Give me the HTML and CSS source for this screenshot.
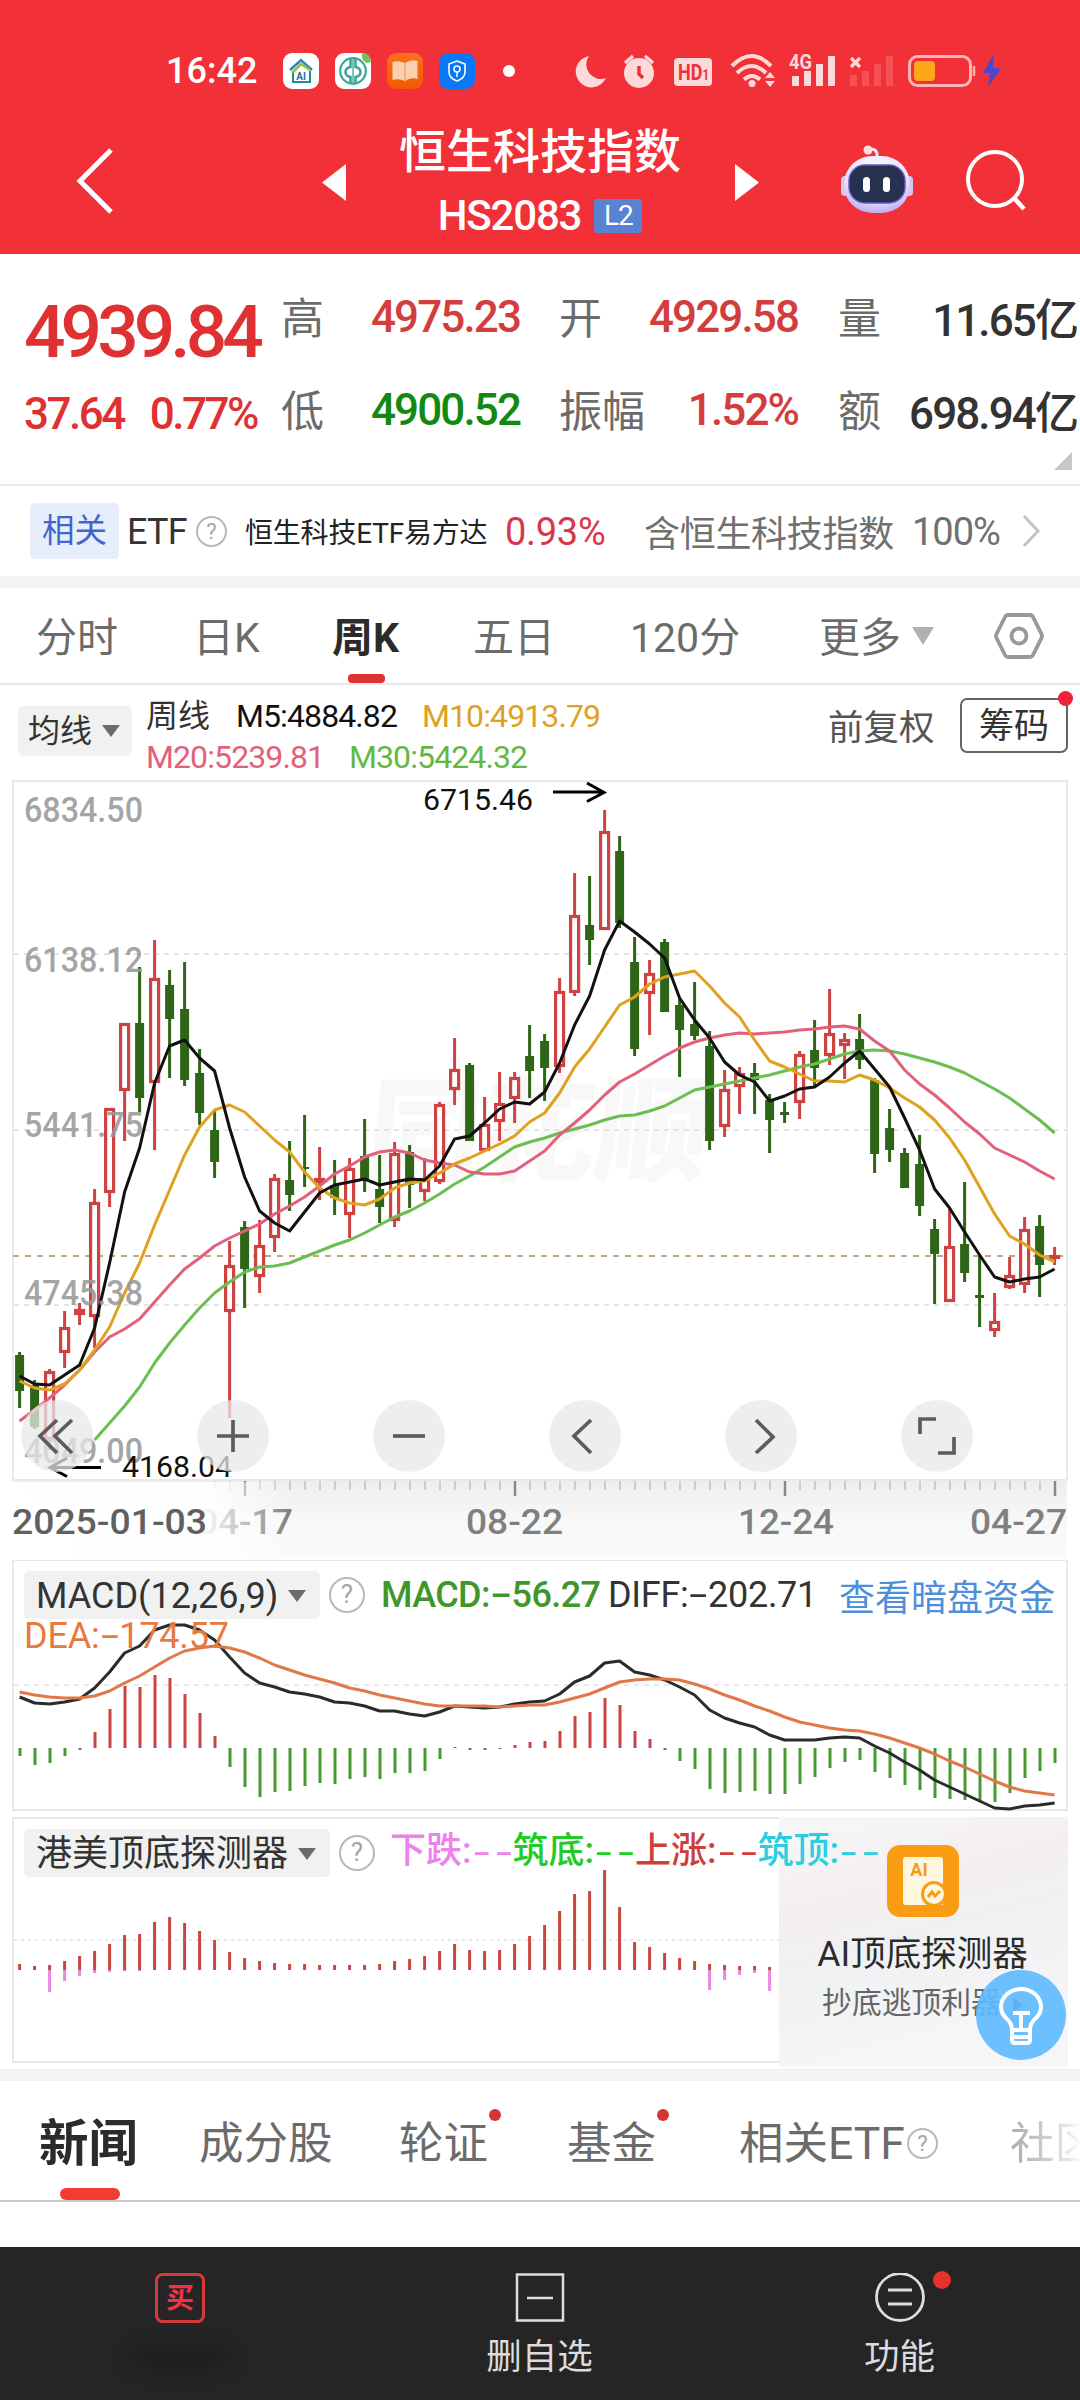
FILE: index.html
```html
<!DOCTYPE html>
<html lang="zh-CN">
<head>
  <meta charset="UTF-8" />
  <meta name="viewport" content="width=device-width, initial-scale=1.0"/>
  <title>恒生科技指数 HS2083</title>
  <link rel="stylesheet" href="styles.css">
</head>
<body>
<div class="page">

  <header class="header">
    <div class="status-bar">
      <span class="clock">16:42</span>
      <div class="app-icons">
        <svg width="36" height="36" viewBox="0 0 36 36"><rect width="36" height="36" rx="9" fill="#fff"/><path d="M7 17L18 7l11 10" fill="none" stroke="#2b7fc4" stroke-width="2.4"/><path d="M9 20l9-9 9 6" fill="none" stroke="#8cc63f" stroke-width="2.6"/><path d="M10 20v9h17V18" fill="none" stroke="#1d8a9b" stroke-width="2"/><text x="18" y="27" font-size="10" font-weight="700" text-anchor="middle" fill="#1d6fa5">AI</text></svg>
        <svg width="36" height="36" viewBox="0 0 36 36"><rect width="36" height="36" rx="9" fill="#fff"/><circle cx="18" cy="18" r="12.8" fill="none" stroke="#3ba79a" stroke-width="2.2"/><path d="M15.500 5v9q-5 1-5 5t5 5v6M20.500 5v9q5 1 5 5t-5 5v6" fill="none" stroke="#3ba79a" stroke-width="2.6"/><path d="M18 6v24" stroke="#7cc5bc" stroke-width="2"/><path d="M27 0q9 0 9 9l-4 1q-6-2-5-10z" fill="#72c35a"/></svg>
        <svg width="36" height="36" viewBox="0 0 36 36"><defs><linearGradient id="book" x2="0" y2="1"><stop offset="0" stop-color="#fb6f1c"/><stop offset="1" stop-color="#f25a02"/></linearGradient></defs><rect width="36" height="36" rx="9" fill="url(#book)"/><path d="M5.500 9q6-2 12.500 1q6-4 12.500-2v18q-7-2-12.500 2q-6-3-12.500-1z" fill="#fbd0b0"/><path d="M18 10v18" stroke="#e9a67c" stroke-width="1.5"/></svg>
        <svg width="36" height="36" viewBox="0 0 36 36"><rect width="36" height="36" rx="9" fill="#0a78f5"/><path d="M18 8l8 3v8q0 6-8 9q-8-3-8-9v-8z" fill="none" stroke="#fff" stroke-width="1.6"/><circle cx="18" cy="16" r="3" fill="none" stroke="#fff" stroke-width="1.5"/><path d="M18 19v5" stroke="#fff" stroke-width="1.5"/></svg>
      </div>
      <i class="status-dot"></i>
      <svg class="sys-icons" width="430" height="40" viewBox="570 51 430 40">
        <path d="M588 56a15.800 15.800 0 1 0 17 22a14.500 14.500 0 0 1-17-22z" fill="#fdd9da"/>
        <circle cx="638" cy="73" r="15" fill="#fdd9da"/><path d="M624 63l8-7M652 63l-8-7" stroke="#fdd9da" stroke-width="3.5"/><path d="M638 66v8l4 4" fill="none" stroke="#f03036" stroke-width="3.5"/>
        <rect x="673" y="58" width="38" height="28" rx="4" fill="#fdd9da"/><text x="677" y="80" font-size="22" font-weight="700" textLength="31" lengthAdjust="spacingAndGlyphs" fill="#f03036">HD<tspan font-size="14">1</tspan></text>
        <g fill="none" stroke="#fdd9da" stroke-width="4"><path d="M731 66q19.500-20 39 0M736 73q14.500-14 29 0M743 79.500q8-7 16 0"/></g><circle cx="751" cy="83.500" r="3.500" fill="#fdd9da"/><path d="M764 78l5-6 5 6zM764 81h10l-5 6z" fill="#fdd9da"/>
        <text x="788" y="69" font-size="20" font-weight="700" textLength="23" lengthAdjust="spacingAndGlyphs" fill="#fdd9da">4G</text>
        <path d="M791 76h7v10h-7zM803 71h7v15h-7zM815 64h7v22h-7zM827 56h7v30h-7z" fill="#fdd9da"/>
        <path d="M850 58l9 9M859 58l-9 9" stroke="#fdd9da" stroke-width="3.2"/>
        <path d="M849 75h7v11h-7zM861 71h7v15h-7zM873 64h7v22h-7zM885 56h7v30h-7z" fill="#f65055"/>
        <rect x="908.500" y="56.500" width="61" height="29" rx="8" fill="none" stroke="#fbb3b5" stroke-width="3"/><rect x="913" y="61" width="21" height="20" rx="4" fill="#fda619"/><path d="M973 66v10" stroke="#fbb3b5" stroke-width="2.500"/>
        <path d="M993 54l-11 19h7l-2 14 13-19h-8z" fill="#4747d6"/>
      </svg>
    </div>
    <div class="title-bar">
      <svg width="40" height="68" viewBox="0 0 40 68"><path d="M36 3L5 34l31 31" fill="none" stroke="#fff" stroke-width="5"/></svg>
      <svg width="26" height="38" viewBox="0 0 26 38"><path d="M25 0v37L1 18.500z" fill="#fff"/></svg>
      <div class="title">
        <h1>恒生科技指数</h1>
        <div class="code">HS2083<span class="l2">L2</span></div>
      </div>
      <svg width="26" height="38" viewBox="0 0 26 38"><path d="M1 0v37l24-18.500z" fill="#fff"/></svg>
      <svg class="robot" width="76" height="70" viewBox="0 0 76 70">
        <defs><radialGradient id="head" cx=".5" cy=".3" r=".8"><stop offset="0" stop-color="#fff"/><stop offset=".6" stop-color="#e9e2fb"/><stop offset="1" stop-color="#a996ee"/></radialGradient></defs>
        <path d="M38 12q1-9-8-8" fill="none" stroke="#f3eefe" stroke-width="3"/><circle cx="29" cy="5" r="4.500" fill="#fbdde2"/>
        <rect x="2" y="31" width="9" height="20" rx="4" fill="#d3c6f7"/><rect x="65" y="31" width="9" height="20" rx="4" fill="#d3c6f7"/>
        <rect x="5" y="11" width="66" height="57" rx="28" fill="url(#head)"/>
        <rect x="10" y="20" width="56" height="38" rx="16" fill="#26304f" stroke="#6a55c6" stroke-width="1.500"/>
        <rect x="24" y="32" width="7" height="15" rx="3.500" fill="#fff"/><rect x="44" y="32" width="7" height="15" rx="3.500" fill="#fff"/>
      </svg>
      <svg class="search" width="64" height="64" viewBox="0 0 64 64"><circle cx="31" cy="30" r="27" fill="none" stroke="#fff" stroke-width="4"/><path d="M50 49l10 11" stroke="#fff" stroke-width="4.500"/></svg>
    </div>
  </header>

  <section class="quote">
    <div class="price">
      <div class="last">4939.84</div>
      <div class="change"><span>37.64</span><span>0.77%</span></div>
    </div>
    <div class="cell"><label>高</label><b class="up">4975.23</b></div>
    <div class="cell"><label>开</label><b class="up">4929.58</b></div>
    <div class="cell"><label>量</label><b>11.65亿</b></div>
    <div class="cell"><label>低</label><b class="down">4900.52</b></div>
    <div class="cell"><label>振幅</label><b class="up">1.52%</b></div>
    <div class="cell"><label>额</label><b>698.94亿</b></div>
    <i class="corner"></i>
  </section>

  <section class="related">
    <span class="tag">相关</span>
    <span class="etf">ETF</span>
    <i class="help small">?</i>
    <span class="fund">恒生科技ETF易方达</span>
    <span class="rate">0.93%</span>
    <span class="contain">含恒生科技指数</span>
    <span class="share">100%</span>
    <svg width="20" height="34" viewBox="0 0 20 34"><path d="M2 2l14 15L2 32" fill="none" stroke="#c4c4c4" stroke-width="3"/></svg>
  </section>

  <nav class="period">
    <span>分时</span>
    <span>日K</span>
    <span class="active">周K</span>
    <span>五日</span>
    <span>120分</span>
    <span>更多<i class="tri light"></i></span>
    <svg width="50" height="48" viewBox="0 0 50 48"><path d="M14 3h22q2 0 3 2l8 16q2 3 0 6l-8 16q-1 2-3 2H14q-2 0-3-2L3 27q-2-3 0-6l8-16q1-2 3-2z" fill="none" stroke="#999" stroke-width="3.800"/><circle cx="25" cy="24" r="7.500" fill="none" stroke="#999" stroke-width="3.800"/></svg>
  </nav>

  <section class="indicator">
    <span class="pill ma-pill">均线<i class="tri"></i></span>
    <div class="ma-list">
      <div><span class="zh">周线</span><span class="m5">M5:4884.82</span><span class="m10">M10:4913.79</span></div>
      <div><span class="m20">M20:5239.81</span><span class="m30">M30:5424.32</span></div>
    </div>
    <span class="adjust">前复权</span>
    <span class="chips">筹码</span>
  </section>

  <section class="panel main-chart">
    <svg id="kline" width="1080" height="780" viewBox="0 780 1080 780"></svg>
    <div class="tools">
      <span><svg viewBox="0 0 72 72"><path d="M36 20L19 36l17 17M51 20L34 36l17 17"/></svg></span>
      <span><svg viewBox="0 0 72 72"><path d="M20 36h32M36 20v32"/></svg></span>
      <span><svg viewBox="0 0 72 72"><path d="M20 36h32"/></svg></span>
      <span><svg viewBox="0 0 72 72"><path d="M42 20L25 36l17 17"/></svg></span>
      <span><svg viewBox="0 0 72 72"><path d="M31 20l17 17-17 16"/></svg></span>
      <span><svg viewBox="0 0 72 72"><path d="M19 34V19h16M37 53h16V37"/></svg></span>
    </div>
  </section>

  <section class="panel macd">
    <svg id="macd" width="1080" height="257" viewBox="0 1560 1080 257"></svg>
    <div class="panel-head">
      <span class="pill macd-pill">MACD(12,26,9)<i class="tri"></i></span>
      <i class="help">?</i>
      <span class="macd-value">MACD:<em>-</em>56.27</span>
      <span class="diff-value">DIFF:<em>-</em>202.71</span>
      <span class="link">查看暗盘资金</span>
    </div>
    <div class="dea-value">DEA:<em>-</em>174.57</div>
  </section>

  <section class="panel detector">
    <svg id="detector" width="1080" height="253" viewBox="0 1817 1080 253"></svg>
    <div class="promo">
      <svg width="72" height="72" viewBox="0 0 72 72"><rect width="72" height="72" rx="13" fill="#fb9d12"/><path d="M19 12h34q3 0 3 3v45H19q-3 0-3-3V15q0-3 3-3z" fill="#fff6df"/><text x="32" y="31" font-size="18" font-weight="700" text-anchor="middle" fill="#f79a15">AI</text><circle cx="47" cy="49" r="11.500" fill="#fff6df" stroke="#fb9d12" stroke-width="3"/><path d="M41 52l4-5 3 4 5-5" fill="none" stroke="#fb9d12" stroke-width="3"/></svg>
      <div class="promo-title">AI顶底探测器</div>
      <div class="promo-sub">抄底逃顶利器<i></i></div>
    </div>
    <div class="panel-head">
      <span class="pill det-pill">港美顶底探测器<i class="tri"></i></span>
      <i class="help">?</i>
      <div class="signals"><span class="s1">下跌:<em>--</em></span><span class="s2">筑底:<em>--</em></span><span class="s3">上涨:<em>--</em></span><span class="s4">筑顶:<em>--</em></span></div>
    </div>
    <svg class="lamp" width="90" height="90" viewBox="0 0 90 90"><circle cx="45" cy="45" r="45" fill="#61bbff" fill-opacity=".92"/><g fill="none" stroke="#fff" stroke-width="4"><path d="M36 60q0-7-6-12q-5-5-5-11a20 18 0 0 1 40 0q0 6-5 11q-6 5-6 12z"/><path d="M37 43h17M45 43v16M36 60v10q0 3 3 3h12q3 0 3-3V60M36 67h18"/></g></svg>
  </section>

  <nav class="news">
    <span class="active">新闻</span>
    <span>成分股</span>
    <span class="dot">轮证</span>
    <span class="dot">基金</span>
    <span>相关ETF<i class="help small">?</i></span>
    <span class="fade">社区</span>
  </nav>

  <footer class="bottom">
    <div class="nav-item">
      <svg width="50" height="50" viewBox="0 0 50 50"><rect x="1.500" y="1.500" width="47" height="47" rx="6" fill="none" stroke="#d63a3c" stroke-width="3"/><text x="25" y="35" font-size="28" font-weight="700" text-anchor="middle" fill="#f5304a">买</text></svg>
      <i class="smudge"></i>
    </div>
    <div class="nav-item">
      <svg width="50" height="50" viewBox="0 0 50 50"><path d="M2 1.500h46v46H2zM12 25h26" fill="none" stroke="#ddd" stroke-width="2.500"/></svg>
      <span>删自选</span>
    </div>
    <div class="nav-item">
      <svg width="50" height="50" viewBox="0 0 50 50"><circle cx="25" cy="24" r="23.500" fill="none" stroke="#ddd" stroke-width="2.800"/><path d="M13 17h24M13 31h24" stroke="#ddd" stroke-width="3"/></svg>
      <i class="badge"></i>
      <span>功能</span>
    </div>
  </footer>
</div>
<script src="charts.js"></script>
</body>
</html>
```

FILE: styles.css
```css
* {
  box-sizing: border-box;
}
body {
  margin: 0;
  background: #fff;
  font-family: Roboto, "Noto Sans CJK SC", sans-serif;
  color: #333;
}
i, em {
  font-style: normal;
}
svg {
  display: block;
}
.page {
  width: 1080px;
  height: 2400px;
  overflow: hidden;
  position: relative;
  display: flex;
  flex-direction: column;
}

/* header */
.header {
  height: 254px;
  background: #f23037;
  color: #fff;
  flex: none;
}
.status-bar {
  height: 111px;
  padding: 31px 0 0 166px;
  display: flex;
  align-items: center;
}
.clock {
  width: 117px;
  font-size: 36px;
  font-weight: 500;
}
.app-icons {
  display: flex;
  gap: 16px;
}
.status-dot {
  width: 12px;
  height: 12px;
  border-radius: 50%;
  background: #fff;
  margin: 0 56px 0 28px;
}
.title-bar {
  display: grid;
  grid-template-columns: 246px 65px 348px 105px 125px 70px;
  padding: 5px 0 0 75px;
  align-items: center;
  height: 138px;
}
.title-bar .robot {
  margin-top: -5px;
}
.title-bar > svg:first-child,
.title-bar .search {
  margin-top: -4px;
}
.title {
  width: 308px;
  text-align: center;
}
.title h1 {
  margin: 0;
  font-size: 47px;
  font-weight: 500;
  line-height: 64px;
  white-space: nowrap;
}
.code {
  display: flex;
  justify-content: center;
  align-items: center;
  font-size: 42px;
  font-weight: 500;
  letter-spacing: -1.200px;
  line-height: 60px;
  padding-top: 2px;
}
.l2 {
  width: 48px;
  height: 34px;
  line-height: 34px;
  background: #5a82d2;
  border-radius: 3px;
  font-size: 28px;
  font-weight: 400;
  margin-left: 13px;
}

/* quote */
.quote {
  position: relative;
  height: 232px;
  border-bottom: 2px solid #ebebeb;
  display: grid;
  grid-template-columns: 257px 278px 279px 242px;
  grid-template-rows: 93px 93px;
  padding: 16px 0 0 24px;
  flex: none;
}
.price {
  grid-row: 1 / 3;
  color: #df3131;
}
.last {
  font-size: 73px;
  font-weight: 500;
  letter-spacing: -4.900px;
  line-height: 125px;
}
.change {
  display: flex;
  justify-content: space-between;
  width: 233px;
  font-size: 44px;
  font-weight: 500;
  letter-spacing: -2.500px;
  line-height: 38px;
}
.cell {
  display: flex;
  width: 239px;
  justify-content: space-between;
  align-items: center;
  height: 93px;
  white-space: nowrap;
}
.cell label {
  font-size: 43px;
  color: #6b6b6b;
  margin-top: -3px;
}
.cell b {
  font-size: 44px;
  font-weight: 500;
  letter-spacing: -1.900px;
  color: #333;
}
.cell .up {
  color: #d23e3e;
}
.cell .down {
  color: #118a11;
}
.corner {
  position: absolute;
  right: 8px;
  bottom: 14px;
  border-bottom: 18px solid #c8c8c8;
  border-left: 18px solid transparent;
}

/* related etf */
.related {
  height: 102px;
  border-bottom: 12px solid #f4f4f4;
  display: grid;
  grid-template-columns: 97px 69px 49px 260px 139px 268px 110px 20px;
  padding-left: 30px;
  align-items: center;
  white-space: nowrap;
  flex: none;
}
.tag {
  width: 89px;
  height: 56px;
  line-height: 56px;
  text-align: center;
  border-radius: 5px;
  background: #e6edfb;
  color: #3f66cc;
  font-size: 32.500px;
}
.etf {
  font-size: 36px;
  letter-spacing: -0.800px;
  padding-top: 2px;
}
.fund {
  font-size: 28px;
  letter-spacing: -0.200px;
  color: #222;
}
.rate {
  font-size: 38px;
  letter-spacing: -0.300px;
  padding-top: 2px;
  color: #d8374a;
}
.contain {
  font-size: 36px;
  letter-spacing: -0.300px;
  color: #707070;
}
.share {
  font-size: 38px;
  letter-spacing: -1px;
  padding-top: 2px;
  color: #707070;
}
.help {
  width: 36px;
  height: 36px;
  line-height: 31px;
  border: 2.500px solid #b8b8b8;
  border-radius: 50%;
  color: #a5a5a5;
  font-size: 26px;
  text-align: center;
  flex: none;
}
.help.small {
  width: 31px;
  height: 31px;
  line-height: 27px;
  border-width: 2px;
  font-size: 22px;
}

/* period tabs */
.period {
  height: 97px;
  border-bottom: 2px solid #e8e8e8;
  display: grid;
  grid-template-columns: 157px 139px 141px 157px 189px 175px 50px;
  padding-left: 36px;
  align-items: center;
  color: #6b6b6b;
  font-size: 41px;
  flex: none;
}
.period span {
  position: relative;
  height: 95px;
  line-height: 100px;
  white-space: nowrap;
}
.period .active {
  color: #2b2b2b;
  font-weight: 700;
}
.period .active::after {
  content: "";
  position: absolute;
  left: 16px;
  bottom: 0;
  width: 37px;
  height: 9px;
  border-radius: 4px;
  background: #df3433;
}
.tri {
  display: inline-block;
  border: 9px solid transparent;
  border-top: 12px solid #6b6b6b;
  border-bottom: 0;
  margin: -5px 0 0 10px;
  vertical-align: middle;
}
.tri.light {
  border-width: 18px 11px 0;
  border-top-color: #b0b0b0;
  margin: -11px 0 0 11px;
}

/* indicator row */
.indicator {
  height: 95px;
  display: grid;
  grid-template-columns: 128px 682px 132px 108px;
  padding-left: 18px;
  white-space: nowrap;
  flex: none;
}
.pill {
  background: #f1f1f1;
  border-radius: 5px;
  color: #333;
}
.ma-pill {
  width: 114px;
  height: 50px;
  line-height: 51px;
  margin-top: 21px;
  padding-left: 10px;
  font-size: 32px;
}
.ma-list {
  padding-top: 11px;
  font-size: 32px;
  line-height: 40px;
  letter-spacing: -0.900px;
}
.ma-list div {
  height: 41px;
}
.ma-list span {
  display: inline-block;
}
.ma-list .zh {
  width: 90px;
  letter-spacing: 0;
}
.ma-list .m5 {
  width: 186px;
  color: #111;
}
.m10 {
  color: #e0a020;
}
.ma-list .m20 {
  width: 203px;
  color: #e2607a;
}
.m30 {
  color: #63b844;
}
.adjust {
  font-size: 35.500px;
  line-height: 52px;
  color: #555;
  margin-top: 17px;
}
.chips {
  position: relative;
  width: 108px;
  height: 55px;
  margin-top: 13px;
  border: 2px solid #666;
  border-radius: 7px;
  font-size: 35px;
  line-height: 53px;
  text-align: center;
}
.chips::after {
  content: "";
  position: absolute;
  right: -7px;
  top: -9px;
  width: 15px;
  height: 15px;
  border-radius: 50%;
  background: #ee2238;
}

/* charts */
.panel {
  position: relative;
  flex: none;
}
.main-chart {
  height: 780px;
}
.tools {
  position: absolute;
  left: 21px;
  top: 620px;
  display: flex;
  gap: 104px;
}
.tools span {
  width: 72px;
  height: 72px;
  border-radius: 50%;
  background: rgba(232, 232, 232, 0.75);
}
.tools path {
  fill: none;
  stroke: #5c5c5c;
  stroke-width: 3.700;
}
.macd {
  height: 257px;
}
.panel-head {
  position: absolute;
  left: 24px;
  top: 11px;
  display: flex;
  align-items: center;
  font-size: 36px;
  height: 48px;
  white-space: nowrap;
}
.panel-head .pill {
  height: 48px;
  line-height: 50px;
  padding-left: 12px;
}
.macd-pill {
  width: 296px;
  font-size: 36px;
}
.panel-head .help {
  margin-left: 9px;
}
.macd em {
  display: inline-block;
  transform: scaleX(1.800);
  margin: 0 5px;
}
.macd-value {
  margin-left: 16px;
  width: 227px;
  color: #3f962a;
  letter-spacing: -0.600px;
  font-weight: 500;
}
.diff-value {
  width: 231px;
  letter-spacing: -0.300px;
}
.link {
  color: #4f8fd8;
  margin-top: -1px;
}
.dea-value {
  position: absolute;
  left: 24px;
  top: 55px;
  color: #e8793f;
  font-size: 36px;
  letter-spacing: -0.200px;
}
.detector {
  height: 253px;
  border-bottom: 1px solid #eee;
}
.detector .panel-head {
  top: 12px;
}
.det-pill {
  width: 306px;
}
.signals {
  display: flex;
  margin: -13px 0 0 15px;
  font-weight: 500;
}
.signals span {
  width: 122.500px;
}
.signals em {
  display: inline-block;
  font-family: Inter, sans-serif;
  font-size: 30px;
  letter-spacing: 2px;
  transform: scaleX(1.400);
  transform-origin: left;
}
.s1 {
  color: #ec82ea;
}
.s2 {
  color: #22cc22;
}
.s3 {
  color: #cf3f3a;
}
.s4 {
  color: #2bcede;
}
.promo {
  position: absolute;
  left: 779px;
  top: 0;
  width: 289px;
  height: 250px;
  padding: 28px 2px 0 0;
  background: linear-gradient(165deg, #f6f6f7 8%, #f5eef0 30%, #eff1f3 50%, #f6f5f8 80%);
  display: flex;
  flex-direction: column;
  align-items: center;
}
.promo-title {
  font-size: 35.500px;
  line-height: 48px;
  margin-top: 13px;
  color: #2b2b2b;
}
.promo-sub {
  font-size: 29.800px;
  line-height: 44px;
  margin: 3px 0 0 0;
  color: #666;
}
.promo-sub i {
  display: inline-block;
  border-left: 10px solid #555;
  border-top: 8px solid transparent;
  border-bottom: 8px solid transparent;
  margin-left: 12px;
}
.lamp {
  position: absolute;
  left: 976px;
  top: 153px;
}

/* news tabs */
.news {
  height: 132px;
  border-top: 11px solid #f4f4f4;
  border-bottom: 2px solid #c8c8c8;
  display: grid;
  grid-template-columns: 160px 200px 168px 172px 271px 90px;
  padding-left: 39px;
  font-size: 44.500px;
  color: #6b6b6b;
  white-space: nowrap;
  flex: none;
}
.news span {
  position: relative;
  height: 119px;
  line-height: 126px;
}
.news .active {
  font-size: 49.500px;
  font-weight: 700;
  color: #2b2b2b;
}
.news .active::after {
  content: "";
  position: absolute;
  left: 21px;
  bottom: 0;
  width: 60px;
  height: 12px;
  border-radius: 6px;
  background: #f23d30;
}
.news .dot::after {
  content: "";
  position: absolute;
  left: 90px;
  top: 28px;
  width: 12px;
  height: 12px;
  border-radius: 50%;
  background: #d63333;
}
.news .help {
  display: inline-block;
  vertical-align: 8px;
  margin-left: 2px;
}
.news .fade {
  background: linear-gradient(90deg, #aaa, #e0e0e0 60%, #fff 80%);
  background-clip: text;
  -webkit-background-clip: text;
  color: transparent;
}

/* bottom bar */
.bottom {
  position: absolute;
  left: 0;
  right: 0;
  bottom: 0;
  height: 153px;
  background: #252525;
  display: flex;
}
.nav-item {
  flex: 1;
  position: relative;
  display: flex;
  flex-direction: column;
  align-items: center;
  padding: 26px 1px 0 0;
  color: #dcdcdc;
  font-size: 35.500px;
}
.nav-item span {
  line-height: 44px;
  margin-top: 12px;
}
.badge {
  position: absolute;
  left: 213px;
  top: 24px;
  width: 18px;
  height: 18px;
  border-radius: 50%;
  background: #e8302c;
}
.smudge {
  width: 100px;
  height: 26px;
  margin-top: 22px;
  border-radius: 50%;
  background: #1e1e1e;
  filter: blur(8px);
}
```

FILE: charts.js
```js
const X0 = 19.6, STEP = 15;
const x = i => X0 + STEP * i;

// [high, body top, body bottom, low, up]
const candles = [
  [1352,1355,1391,1408,0],[1380,1385,1427,1429,0],[1369,1371,1440,1450,1],[1311,1327,1353,1368,1],[1303,1309,1315,1325,1],
  [1189,1202,1317,1348,1],[1108,1108,1193,1207,1],[1023,1023,1091,1141,1],[967,1023,1098,1112,0],[940,978,1083,1150,1],
  [970,985,1019,1078,0],[962,1009,1080,1086,0],[1049,1073,1113,1125,0],[1110,1130,1162,1178,0],[1241,1265,1312,1418,1],
  [1221,1227,1269,1308,0],[1220,1245,1277,1293,1],[1174,1178,1238,1252,1],[1141,1180,1195,1211,0],[1115,1167,1169,1187,0],
  [1147,1178,1183,1200,1],[1160,1185,1198,1215,0],[1158,1168,1215,1238,1],[1119,1156,1179,1192,0],[1155,1189,1207,1223,0],
  [1142,1153,1221,1227,1],[1145,1152,1185,1208,0],[1158,1178,1192,1201,1],[1102,1104,1182,1184,1],[1038,1069,1090,1105,1],
  [1063,1065,1141,1141,0],[1097,1124,1151,1151,1],[1072,1103,1122,1141,1],[1072,1077,1099,1123,1],[1025,1056,1071,1098,0],
  [1034,1041,1068,1101,0],[978,991,1067,1073,1],[873,915,993,996,1],[876,925,940,965,0],[810,831,930,930,1],
  [836,851,923,928,0],[937,962,1049,1056,0],[960,973,994,1035,1],[939,942,1012,1012,0],[999,1005,1030,1077,0],
  [982,1024,1036,1040,0],[1031,1046,1141,1150,0],[1070,1089,1127,1137,1],[1067,1073,1087,1114,1],[1063,1073,1080,1114,0],
  [1094,1100,1120,1153,0],[1102,1112,1115,1123,0],[1051,1054,1103,1119,1],[1020,1050,1068,1086,0],[989,1033,1056,1065,1],
  [1033,1039,1046,1079,1],[1014,1039,1060,1069,0],[1078,1080,1154,1173,0],[1109,1128,1150,1162,0],[1148,1153,1188,1188,0],
  [1135,1164,1206,1216,0],[1219,1229,1254,1304,0],[1209,1246,1302,1302,1],[1182,1244,1273,1282,0],[1255,1295,1298,1327,0],
  [1293,1321,1331,1337,1],[1257,1275,1288,1289,1],[1217,1229,1285,1293,1],[1215,1226,1265,1297,0],[1247,1255,1259,1265,1]
];
const ma5 = [1376,1384,1385,1375,1365,1328,1263,1192,1148,1083,1046,1040,1058,1071,1128,1177,1211,1223,1231,1212,1193,1185,1182,1179,1185,1182,1179,1180,1166,1139,1136,1123,1109,1102,1104,1092,1063,1025,996,950,921,932,944,958,998,1020,1038,1062,1075,1082,1101,1096,1089,1087,1077,1063,1051,1069,1087,1118,1150,1189,1208,1232,1255,1277,1282,1279,1277,1269];
const ma10 = [1381,1388,1390,1384,1370,1350,1327,1293,1263,1225,1190,1155,1127,1110,1105,1112,1126,1140,1152,1172,1188,1198,1203,1205,1199,1188,1183,1181,1173,1164,1158,1151,1144,1136,1122,1113,1093,1067,1049,1027,1005,997,984,977,974,971,986,1003,1017,1040,1061,1067,1074,1081,1081,1082,1075,1080,1088,1098,1107,1120,1138,1160,1187,1214,1236,1244,1255,1262];
const ma20 = [1421,1410,1398,1385,1370,1352,1337,1329,1319,1302,1285,1269,1258,1246,1238,1231,1224,1214,1206,1197,1186,1174,1166,1157,1152,1150,1153,1160,1163,1165,1172,1174,1174,1171,1161,1151,1135,1123,1110,1095,1082,1074,1065,1056,1048,1042,1038,1035,1033,1034,1033,1032,1030,1029,1027,1026,1029,1041,1051,1070,1084,1095,1108,1122,1134,1148,1155,1162,1171,1179];
const ma30 = [null,null,null,null,null,1440,1423,1406,1387,1363,1343,1325,1308,1293,1282,1272,1267,1266,1263,1257,1251,1245,1240,1233,1225,1217,1211,1203,1194,1184,1176,1167,1157,1147,1142,1138,1133,1129,1125,1120,1116,1115,1111,1106,1098,1090,1087,1084,1081,1078,1075,1071,1067,1064,1059,1054,1051,1050,1051,1054,1058,1062,1067,1073,1081,1089,1098,1109,1120,1133];

const macdBars = [8,17,15,8,2,-16,-39,-62,-61,-73,-70,-54,-35,-12,19,39,49,44,43,38,35,36,31,29,31,25,25,23,11,-1,2,2,1,-3,-6,-7,-17,-32,-36,-50,-43,-17,-9,2,13,21,41,45,44,43,46,46,36,29,20,14,12,24,30,37,42,50,51,52,53,54,45,30,23,15];
const diff = [1697,1703,1704,1702,1699,1688,1672,1653,1646,1630,1625,1625,1630,1640,1657,1673,1683,1687,1692,1694,1697,1702,1703,1706,1711,1711,1714,1716,1712,1706,1707,1708,1707,1704,1702,1701,1694,1682,1676,1663,1661,1672,1675,1680,1687,1695,1710,1718,1723,1727,1735,1740,1740,1740,1738,1737,1738,1746,1753,1762,1770,1780,1787,1794,1801,1808,1809,1806,1805,1803];
const dea = [1692,1695,1697,1698,1698,1696,1691,1683,1676,1667,1658,1651,1648,1646,1648,1652,1658,1665,1670,1675,1679,1683,1688,1691,1695,1698,1701,1704,1706,1706,1706,1706,1707,1706,1705,1705,1702,1698,1694,1688,1682,1680,1679,1679,1680,1684,1689,1695,1700,1706,1711,1717,1722,1725,1728,1730,1731,1734,1738,1743,1748,1754,1761,1767,1774,1781,1787,1791,1793,1795];

const rise = [6,4,5,9,14,19,26,35,36,48,53,47,39,30,18,12,9,7,6,6,5,5,5,5,6,9,11,14,19,26,20,19,20,26,34,45,59,76,79,100,63,28,23,17,12,9,6,5,4,4,3];
const fall = { 2: 22, 3: 11, 4: 6, 5: 3, 6: 2, 7: 1, 8: 1, 46: 20, 47: 10, 48: 5, 49: 3, 50: 21 };

function line(x1, y1, x2, y2, color, w, extra = "") {
  return `<line x1="${x1}" y1="${y1}" x2="${x2}" y2="${y2}" stroke="${color}" stroke-width="${w}" ${extra}/>`;
}
function curve(data, color) {
  const pts = data.map((y, i) => y === null ? "" : `${x(i)},${y}`).join(" ");
  return `<polyline points="${pts}" fill="none" stroke="${color}" stroke-width="3" stroke-linejoin="round"/>`;
}
function text(tx, y, str, size, width, color, extra = "") {
  return `<text x="${tx}" y="${y}" font-size="${size}" textLength="${width}" lengthAdjust="spacingAndGlyphs" fill="${color}" ${extra}>${str}</text>`;
}
function frame(y, h) {
  return `<rect x="13" y="${y}" width="1054" height="${h}" fill="none" stroke="#e9e9e9" stroke-width="2"/>`;
}

function drawKline() {
  let s = `<defs>
    <linearGradient id="axis" x2="0" y2="1"><stop offset="0" stop-color="#eee"/><stop offset=".5" stop-color="#f8f8f8"/><stop offset="1" stop-color="#fafafa"/></linearGradient>
    <linearGradient id="cover"><stop offset="0" stop-color="#fff"/><stop offset=".72" stop-color="#fff" stop-opacity=".9"/><stop offset="1" stop-color="#fff" stop-opacity="0"/></linearGradient>
  </defs>`;
  s += frame(781, 699);
  s += `<text transform="translate(364 1172) skewX(-6)" font-size="114" font-weight="900" fill="#f8f8f8">同花顺</text>`;
  [954, 1130, 1305].forEach(y => s += line(14, y, 1066, y, "#dcdcdc", 1.5, 'stroke-dasharray="5 5"'));
  s += line(13, 1256, 1066, 1256, "#c2a67c", 2, 'stroke-dasharray="6 6"');

  candles.forEach(([h, t, b, l, up], i) => {
    const c = up ? "#cf4242" : "#2f6516";
    if (h < t) s += line(x(i), h, x(i), t, c, 3);
    if (l > b) s += line(x(i), b, x(i), l, c, 3);
    if (up) s += `<rect x="${x(i) - 4}" y="${t + 1.5}" width="8" height="${Math.max(b - t - 3, 1)}" fill="#fff" stroke="${c}" stroke-width="3.2"/>`;
    else s += `<rect x="${x(i) - 4.5}" y="${t}" width="9" height="${b - t}" fill="${c}"/>`;
  });
  s += curve(ma30, "#6abf50") + curve(ma20, "#e2607a") + curve(ma10, "#e0a020") + curve(ma5, "#111");

  [["6834.50", 822], ["6138.12", 972], ["5441.75", 1137], ["4745.38", 1305], ["4049.00", 1463]].forEach(([v, y]) => {
    s += text(24, y, v, 35, 119, "#999", 'font-weight="500" fill-opacity=".9"');
  });
  s += text(423, 810, "6715.46", 30, 110, "#111");
  s += `<path d="M553 792h50M587 783l17 9.500-17 9" fill="none" stroke="#000" stroke-width="3"/>`;
  s += text(122, 1477, "4168.04", 30, 110, "#111");
  s += `<path d="M101 1467.500H51M67 1458l-17 9.500 17 9" fill="none" stroke="#000" stroke-width="3"/>`;

  // time axis
  s += `<rect x="13" y="1481" width="1054" height="78" fill="url(#axis)"/>`;
  for (let i = 13; i < 70; i++) {
    const major = i % 18 === 15;
    s += line(x(i) + 0.4, 1481, x(i) + 0.4, major ? 1496 : 1490, major ? "#888" : "#ccc", major ? 2.5 : 2);
  }
  s += text(197, 1534, "04-17", 35, 96, "#808080", 'font-weight="500"');
  s += `<rect x="0" y="1482" width="290" height="78" fill="url(#cover)"/>`;
  s += text(12, 1534, "2025-01-03", 35, 195, "#606060", 'font-weight="500"');
  s += text(466, 1534, "08-22", 35, 97, "#808080", 'font-weight="500"');
  s += text(738, 1534, "12-24", 35, 96, "#808080", 'font-weight="500"');
  s += text(970, 1534, "04-27", 35, 97, "#808080", 'font-weight="500"');
  document.getElementById("kline").innerHTML = s;
}

function drawMacd() {
  let s = frame(1560, 250) + line(14, 1685, 1066, 1685, "#e2e2e2", 1.5, 'stroke-dasharray="5 5"');
  macdBars.forEach((v, i) => s += line(x(i) + 0.4, 1748, x(i) + 0.4, 1748 + v, v > 0 ? "#459a32" : "#c94444", 3));
  s += curve(diff, "#2b2b2b") + curve(dea, "#e07848");
  document.getElementById("macd").innerHTML = s;
}

function drawDetector() {
  let s = frame(1818, 244) + line(14, 1940, 780, 1940, "#e2e2e2", 1.5, 'stroke-dasharray="3 4"');
  rise.forEach((v, i) => {
    s += line(x(i), 1970, x(i), 1970 - v, "#c9473c", 3);
    if (fall[i]) s += line(x(i), 1970, x(i), 1970 + fall[i], "#e58ae4", 3);
  });
  document.getElementById("detector").innerHTML = s;
}

drawKline();
drawMacd();
drawDetector();
```
